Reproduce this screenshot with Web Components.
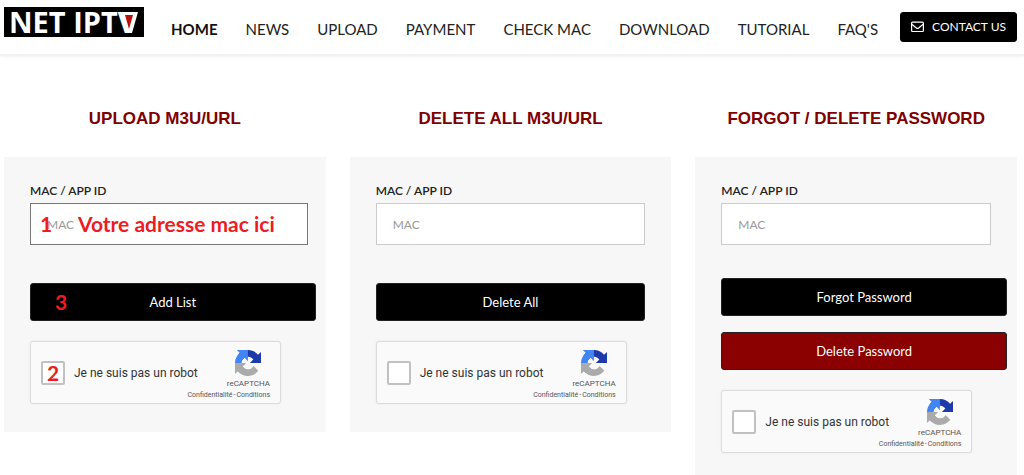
<!DOCTYPE html>
<html lang="fr">
<head>
<meta charset="utf-8">
<title>NET IPTV</title>
<style>
  body { margin: 0; background: #fff; color: #222; font-family: Lato, "Open Sans", sans-serif; }
  main { display: grid; grid-template-columns: repeat(3, minmax(0, 1fr)); gap: 24px; align-items: start; padding: 48px 7px 0 4px; }
</style>
</head>
<body>
<site-header>
  <nav-link current>HOME</nav-link>
  <nav-link>NEWS</nav-link>
  <nav-link>UPLOAD</nav-link>
  <nav-link>PAYMENT</nav-link>
  <nav-link>CHECK MAC</nav-link>
  <nav-link>DOWNLOAD</nav-link>
  <nav-link>TUTORIAL</nav-link>
  <nav-link>FAQ'S</nav-link>
</site-header>
<main>
  <form-panel heading="UPLOAD M3U/URL">
    <mac-field active><hand-note slot="step">1</hand-note><hand-note slot="hint">Votre adresse mac ici</hand-note></mac-field>
    <action-button>Add List<hand-note slot="note">3</hand-note></action-button>
    <robot-check><hand-note slot="note">2</hand-note></robot-check>
  </form-panel>
  <form-panel heading="DELETE ALL M3U/URL" inset>
    <mac-field></mac-field>
    <action-button>Delete All</action-button>
    <robot-check></robot-check>
  </form-panel>
  <form-panel heading="FORGOT / DELETE PASSWORD" compact>
    <mac-field></mac-field>
    <action-button>Forgot Password</action-button>
    <action-button tone="danger">Delete Password</action-button>
    <robot-check></robot-check>
  </form-panel>
</main>
<script>
const define = (name, html, setup) => {
  const template = document.createElement('template');
  template.innerHTML = html;
  customElements.define(name, class extends HTMLElement {
    constructor() {
      super();
      this.attachShadow({ mode: 'open' }).append(template.content.cloneNode(true));
    }
    connectedCallback() { if (setup) setup(this, this.shadowRoot); }
  });
};

define('site-logo', `
  <style>
    :host { display: block; }
    a { display: block; }
    svg { display: block; overflow: visible; }
    text { font: 700 29px "Open Sans", "Noto Sans", sans-serif; fill: #fff; }
  </style>
  <a href="#" aria-label="NET IPTV">
    <svg width="140" height="30" viewBox="0 0 140 30">
      <rect width="140" height="30" fill="#000"/>
      <text x="5" y="26">NET IPTV</text>
      <path d="M117 5h17l-6 21h-6z" fill="#fff"/>
      <path d="M121 8h8l-4 14z" fill="#b80f0f"/>
    </svg>
  </a>`);

define('nav-link', `
  <style>
    :host { display: block; }
    a { color: #222; text-decoration: none; font-size: 15px; line-height: 24px; white-space: nowrap; }
    :host([current]) a { font-weight: 700; color: #111; }
  </style>
  <a href="#"><slot></slot></a>`);

define('contact-button', `
  <style>
    :host { display: block; }
    button { display: flex; align-items: center; gap: 8px; height: 30px; padding: 0 10px; border: 1px solid #000; border-radius: 3px; background: #000; color: #fff; font: 400 12px/20px Lato, sans-serif; white-space: nowrap; }
  </style>
  <button type="button">
    <svg width="13" height="12" viewBox="0 0 13 12" fill="none" stroke="#fff" stroke-width="1.2" aria-hidden="true"><rect x=".6" y="1.1" width="11.8" height="9.4" rx="1"/><path d="M.8 3.2l4.6 3.7q1.1.8 2.2 0l4.6-3.7"/></svg>
    <span>CONTACT US</span>
  </button>`);

define('site-header', `
  <style>
    :host { display: block; }
    header { display: flex; align-items: flex-start; justify-content: space-between; height: 55px; padding: 0 7px 0 4px; box-sizing: border-box; border-bottom: 1px solid #f1f1f1; box-shadow: 0 1px 3px #e8e8e8; }
    site-logo { padding-top: 7px; }
    .right { display: flex; align-items: flex-start; gap: 22px; padding-top: 12px; }
    nav { display: flex; gap: 28px; padding-top: 5px; }
  </style>
  <header>
    <site-logo></site-logo>
    <div class="right"><nav><slot></slot></nav><contact-button></contact-button></div>
  </header>`);

define('form-panel', `
  <style>
    :host { display: block; --field-end: 16px; --field-gap: 38px; --button-gap: 16px; }
    :host([inset]) { --panel-end: 26px; --field-end: 0px; }
    :host([compact]) { --field-gap: 33px; }
    h2 { margin: 0 0 22px; text-align: center; color: #800000; font: 700 17px/32px "Liberation Sans", Arial, sans-serif; white-space: nowrap; }
    section { background: #f7f7f7; padding: 24px var(--panel-end, 10px) 28px 26px; }
  </style>
  <h2></h2>
  <section><slot></slot></section>`,
  (host, root) => { root.querySelector('h2').textContent = host.getAttribute('heading'); });

define('mac-field', `
  <style>
    :host { display: block; margin: 0 var(--field-end) var(--field-gap) 0; }
    :host([active]) { margin-right: 8px; }
    label { display: block; font-size: 12px; font-weight: 600; line-height: 20px; margin-bottom: 2px; }
    .box { position: relative; }
    input { display: block; box-sizing: border-box; width: 100%; height: 42px; padding: 0 16px; border: 1px solid #ccc; border-radius: 0; background: #fff; font: 400 12px Lato, sans-serif; }
    :host([active]) input { border-color: #777; }
    input::placeholder { color: #999; opacity: 1; }
    slot { position: absolute; top: 9px; display: block; }
    slot[name=step] { left: 10px; }
    slot[name=hint] { left: 48px; }
  </style>
  <label for="mac">MAC / APP ID</label>
  <div class="box"><input id="mac" type="text" placeholder="MAC"><slot name="step"></slot><slot name="hint"></slot></div>`);

define('action-button', `
  <style>
    :host { display: block; position: relative; margin-bottom: var(--button-gap); }
    button { display: block; width: 100%; height: 38px; border: 1px solid #222; border-radius: 3px; background: #000; color: #fff; font: 400 13px/20px Lato, sans-serif; }
    :host([tone=danger]) button { background: #8b0000; }
    slot[name=note] { position: absolute; left: 25px; top: 7px; display: block; }
  </style>
  <button type="button"><slot></slot></button><slot name="note"></slot>`);

define('robot-check', `
  <style>
    :host { display: block; padding-top: 4px; font-family: Roboto, sans-serif; }
    .box { display: flex; align-items: center; box-sizing: border-box; width: 251px; height: 63px; padding: 0 10px; border: 1px solid #dcdcdc; border-radius: 3px; background: #fafafa; box-shadow: 0 0 2px #e4e4e4; }
    .tick { position: relative; }
    input { display: block; appearance: none; box-sizing: border-box; width: 24px; height: 24px; margin: 0; border: 2px solid #c1c1c1; border-radius: 2px; background: #fff; }
    slot { position: absolute; left: 6px; top: 0; display: block; }
    label { flex: 1; margin-left: 9px; font-size: 12px; line-height: 16px; color: #333; white-space: nowrap; }
    .brand { display: flex; flex-direction: column; align-items: flex-end; width: 50px; padding-top: 4px; }
    .mark { display: flex; flex-direction: column; align-items: center; gap: 1px; color: #555; font-size: 8px; line-height: 14px; }
    .legal { display: flex; gap: 1px; color: #555; font-size: 7px; line-height: 8px; white-space: nowrap; }
    .legal a { color: inherit; text-decoration: none; }
  </style>
  <div class="box">
    <div class="tick"><input id="robot" type="checkbox"><slot name="note"></slot></div>
    <label for="robot">Je ne suis pas un robot</label>
    <div class="brand">
      <div class="mark">
        <svg width="26" height="26" viewBox="0 0 64 64" aria-hidden="true">
          <path fill="#1c3aa9" d="M64 31.955l-.033-1.37V4.687l-7.16 7.16C50.948 4.674 42.033.093 32.05.093c-10.4 0-19.622 4.96-25.458 12.64l11.736 11.86a15.55 15.55 0 0 1 4.754-5.334c2.05-1.6 4.952-2.906 8.968-2.906.485 0 .86.057 1.135.163 4.976.393 9.288 3.14 11.828 7.124l-8.307 8.307L64 31.953"/>
          <path fill="#4285f4" d="M31.862.094l-1.37.033H4.594l7.16 7.16C4.58 13.147 0 22.06 0 32.046c0 10.4 4.96 19.622 12.64 25.458L24.5 45.768a15.55 15.55 0 0 1-5.334-4.754c-1.6-2.05-2.906-4.952-2.906-8.968 0-.485.057-.86.163-1.135.393-4.976 3.14-9.288 7.124-11.828l8.307 8.307L31.86.095"/>
          <path fill="#ababab" d="M.001 32.045l.033 1.37v25.898l7.16-7.16c5.86 7.173 14.774 11.754 24.76 11.754 10.4 0 19.622-4.96 25.458-12.64l-11.736-11.86a15.55 15.55 0 0 1-4.754 5.334c-2.05 1.6-4.952 2.906-8.968 2.906-.485 0-.86-.057-1.135-.163-4.976-.393-9.288-3.14-11.828-7.124l8.307-8.307-27.29.001"/>
        </svg>
        <span>reCAPTCHA</span>
      </div>
      <div class="legal"><a href="#">Confidentialité</a><span>-</span><a href="#">Conditions</a></div>
    </div>
  </div>`);

define('hand-note', `
  <style>
    :host { display: block; color: #ed1c24; font: 700 21px/24px Lato, "Open Sans", sans-serif; white-space: nowrap; pointer-events: none; }
  </style>
  <slot></slot>`);
</script>
</body>
</html>
